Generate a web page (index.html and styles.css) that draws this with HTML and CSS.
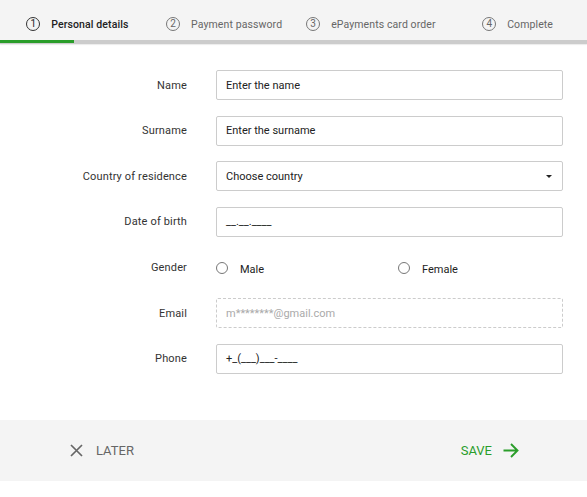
FILE: index.html
```html
<!DOCTYPE html>
<html lang="en">
<head>
<meta charset="utf-8">
<title>Personal details</title>
<link rel="stylesheet" href="styles.css">
</head>
<body>
<div class="page">
  <header class="steps">
    <div class="step active"><span class="num">1</span><span class="step-label">Personal details</span></div>
    <div class="step"><span class="num">2</span><span class="step-label">Payment password</span></div>
    <div class="step"><span class="num">3</span><span class="step-label">ePayments card order</span></div>
    <div class="step"><span class="num">4</span><span class="step-label">Complete</span></div>
  </header>
  <div class="progress"><div class="progress-fill"></div></div>

  <form class="form">
    <div class="row">
      <label class="label">Name</label>
      <div class="field">Enter the name</div>
    </div>
    <div class="row">
      <label class="label">Surname</label>
      <div class="field">Enter the surname</div>
    </div>
    <div class="row">
      <label class="label">Country of residence</label>
      <div class="field select">Choose country<span class="caret"></span></div>
    </div>
    <div class="row">
      <label class="label">Date of birth</label>
      <div class="field">__.__.____</div>
    </div>
    <div class="row">
      <label class="label">Gender</label>
      <div class="radios">
        <span class="radio"><span class="circle"></span><span class="radio-text">Male</span></span>
        <span class="radio"><span class="circle"></span><span class="radio-text">Female</span></span>
      </div>
    </div>
    <div class="row">
      <label class="label">Email</label>
      <div class="field disabled">m********@gmail.com</div>
    </div>
    <div class="row">
      <label class="label">Phone</label>
      <div class="field">+_(___)___-____</div>
    </div>
  </form>

  <footer class="actions">
    <span class="btn later">
      <svg class="icon-x" width="13" height="13" viewBox="0 0 13 13"><path d="M1 1L12 12M12 1L1 12" stroke="#666" stroke-width="1.7" fill="none"/></svg>
      LATER
    </span>
    <span class="btn save">
      SAVE
      <svg class="icon-arrow" width="16" height="15" viewBox="0 0 16 15"><path d="M0.5 7.5H14.5M8 1L14.5 7.5L8 14" stroke="#2a9d2a" stroke-width="1.9" fill="none"/></svg>
    </span>
  </footer>
</div>
</body>
</html>
```

FILE: styles.css
```css
* { box-sizing: border-box; }
html, body { margin: 0; padding: 0; background: #fff; }
body {
  font-family: Roboto, "Liberation Sans", Arial, sans-serif;
  font-size: 11px;
  color: #222;
}
.page { width: 587px; }

.steps {
  display: grid;
  grid-template-columns: repeat(4, 1fr);
  height: 40px;
  padding-top: 8px;
  background: #f4f4f4;
}
.step {
  display: flex;
  align-items: center;
  justify-content: center;
  gap: 11px;
  color: #666;
  font-size: 10.5px;
  letter-spacing: 0.1px;
  padding-left: 8px;
}
.step .num {
  width: 14px;
  height: 14px;
  border: 1px solid #777;
  border-radius: 50%;
  display: flex;
  align-items: center;
  justify-content: center;
  font-size: 10px;
  line-height: 1;
  color: #666;
  letter-spacing: 0;
}
.step.active { color: #222; font-weight: 500; }
.step.active .num { border-color: #333; color: #222; font-weight: 400; }

.progress {
  height: 4px;
  background: #ccc;
  box-shadow: 0 1px 1px rgba(0,0,0,0.08);
}
.progress-fill {
  width: 74px;
  height: 3px;
  background: #2a9d2a;
}

.form {
  display: flex;
  flex-direction: column;
  gap: 15.67px;
  padding: 26px 24px 0 0;
  margin: 0;
}
.row {
  display: grid;
  grid-template-columns: 187px 347px;
  column-gap: 29px;
  align-items: center;
  height: 30px;
}
.label {
  text-align: right;
  color: #333;
  font-size: 11px;
  letter-spacing: 0.15px;
}
.field {
  position: relative;
  height: 30px;
  border: 1px solid #ccc;
  border-radius: 2px;
  padding: 0 9px;
  display: flex;
  align-items: center;
  color: #222;
  font-size: 11px;
  background: #fff;
}
.field.disabled {
  border-style: dashed;
  color: #aaa;
}
.caret {
  position: absolute;
  right: 10px;
  top: 13px;
  width: 0;
  height: 0;
  border-left: 3px solid transparent;
  border-right: 3px solid transparent;
  border-top: 3px solid #222;
}

.radios {
  display: flex;
  align-items: center;
}
.radio {
  display: flex;
  align-items: center;
  gap: 12px;
  width: 182px;
  flex: none;
  color: #222;
}
.circle {
  width: 12px;
  height: 12px;
  flex: none;
  border: 1px solid #777;
  border-radius: 50%;
  background: #fff;
}
.radio-text { position: relative; top: 2px; }

.actions {
  margin-top: 46px;
  height: 61px;
  background: #f4f4f4;
  display: flex;
  align-items: center;
  justify-content: space-between;
  padding: 0 68px 0 70px;
  font-size: 13px;
}
.btn {
  display: flex;
  align-items: center;
  gap: 13px;
}
.later { color: #666; }
.save { color: #2a9d2a; gap: 11px; }
.icon-x, .icon-arrow { display: block; }
```
